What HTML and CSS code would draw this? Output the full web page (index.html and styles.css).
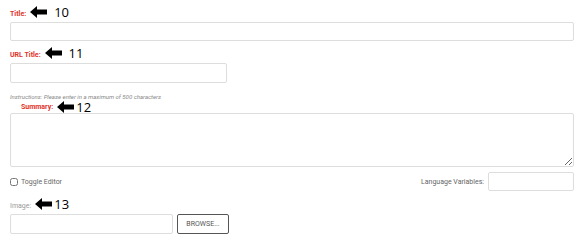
FILE: index.html
```html
<!DOCTYPE html>
<html lang="en">
<head>
    <meta charset="UTF-8">
    <title>Edit Article</title>
    <link rel="stylesheet" href="styles.css">
</head>
<body>

    <div class="form">

        <div class="label-row row-title">
            <label class="req" for="title">Title:</label>
            <span class="note">
                <svg class="arrow" viewBox="0 0 17 12"><path d="M0 6 L7 0 L7 3.5 L17 3.5 L17 8.5 L7 8.5 L7 12 Z"/></svg>
                <span class="num">10</span>
            </span>
        </div>
        <input type="text" id="title" class="text-input full">

        <div class="label-row row-url">
            <label class="req" for="urlTitle">URL Title:</label>
            <span class="note">
                <svg class="arrow" viewBox="0 0 17 12"><path d="M0 6 L7 0 L7 3.5 L17 3.5 L17 8.5 L7 8.5 L7 12 Z"/></svg>
                <span class="num">11</span>
            </span>
        </div>
        <input type="text" id="urlTitle" class="text-input half">

        <p class="instructions">Instructions: Please enter in a maximum of 500 characters</p>

        <div class="label-row row-summary">
            <label class="req" for="summary">Summary:</label>
            <span class="note tight">
                <svg class="arrow" viewBox="0 0 17 12"><path d="M0 6 L7 0 L7 3.5 L17 3.5 L17 8.5 L7 8.5 L7 12 Z"/></svg>
                <span class="num">12</span>
            </span>
        </div>
        <textarea id="summary" class="summary"></textarea>

        <div class="options-row">
            <label class="toggle"><input type="checkbox" class="check"> Toggle Editor</label>
            <div class="lang">
                <label for="langVars">Language Variables:</label>
                <input type="text" id="langVars" class="text-input lang-input">
            </div>
        </div>

        <div class="label-row row-image">
            <label class="plain" for="image">Image:</label>
            <span class="note tight">
                <svg class="arrow" viewBox="0 0 17 12"><path d="M0 6 L7 0 L7 3.5 L17 3.5 L17 8.5 L7 8.5 L7 12 Z"/></svg>
                <span class="num">13</span>
            </span>
        </div>
        <div class="image-row">
            <input type="text" id="image" class="text-input image-input">
            <button class="browse">Browse...</button>
        </div>

    </div>

</body>
</html>
```

FILE: styles.css
```css
body {
    margin: 0;
    background: #fff;
    font-family: Roboto, 'Liberation Sans', sans-serif;
    color: #555;
}

.form {
    padding: 0 10px;
}

.label-row {
    display: flex;
    align-items: flex-end;
}

.row-title {
    height: 22px;
}

.row-url {
    height: 22px;
}

.row-summary {
    height: 13px;
    padding-left: 11px;
}

.row-image {
    height: 23px;
}

.label-row label {
    font-size: 7px;
    line-height: 10px;
    margin-bottom: 3px;
}

.row-summary label {
    margin-bottom: 1px;
}

.req {
    color: #e0332b;
    font-weight: bold;
}

.plain {
    color: #999;
}

.note {
    display: flex;
    align-items: center;
    gap: 7px;
    margin-left: 4px;
    margin-bottom: 4px;
}

.note.tight {
    gap: 2px;
}

.row-summary .note {
    margin-bottom: 0;
}

.arrow {
    width: 17px;
    height: 12px;
    fill: #000;
}

.num {
    font-family: 'Open Sans', 'Liberation Sans', sans-serif;
    font-size: 13px;
    line-height: 10px;
    color: #000;
}

.text-input {
    display: block;
    box-sizing: border-box;
    height: 19px;
    margin: 0;
    border: 1px solid #ddd;
    border-radius: 2px;
    background: #fff;
}

.full {
    width: 100%;
}

.half {
    width: 217px;
    height: 20px;
}

.instructions {
    margin: 10px 0 0;
    font-size: 6px;
    line-height: 7px;
    font-style: italic;
    color: #888;
}

.summary {
    display: block;
    box-sizing: border-box;
    width: 100%;
    height: 54px;
    margin: 0;
    border: 1px solid #ddd;
    border-radius: 2px;
}

.options-row {
    display: flex;
    justify-content: space-between;
    align-items: center;
    margin-top: 5px;
}

.toggle {
    display: flex;
    align-items: center;
    gap: 3px;
    font-size: 7px;
    color: #666;
    margin-top: 1px;
}

.check {
    width: 8px;
    height: 8px;
    margin: 0;
}

.lang {
    display: flex;
    align-items: center;
    gap: 4px;
    font-size: 7px;
    color: #666;
}

.lang-input {
    width: 86px;
}

.image-row {
    display: flex;
    gap: 4px;
}

.image-input {
    width: 163px;
    height: 20px;
}

.browse {
    box-sizing: border-box;
    width: 52px;
    height: 20px;
    margin: 0;
    padding: 0;
    border: 1px solid #555;
    border-radius: 2px;
    background: #fff;
    font-family: Roboto, 'Liberation Sans', sans-serif;
    font-size: 7px;
    text-transform: uppercase;
    color: #555;
}
```
